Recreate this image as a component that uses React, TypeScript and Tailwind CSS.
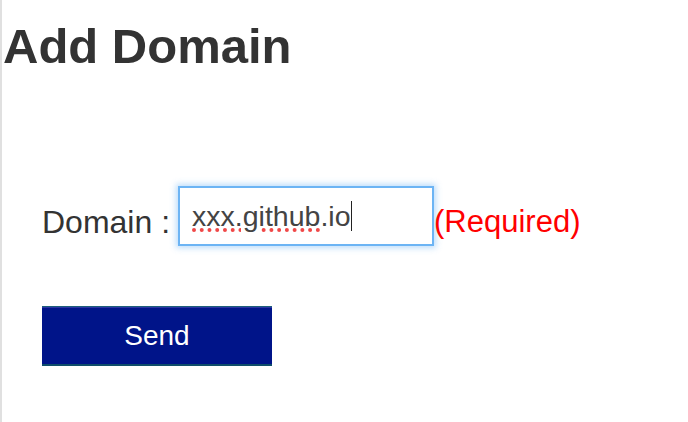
export default function App() {
  return (
    <div className="min-h-screen border-l-2 border-[#e0e0e0] bg-white font-['Liberation_Sans',Arial,sans-serif] text-[#333]">
      <h1 className="ml-px pt-[18px] text-[49px] font-bold leading-[56px]">Add Domain</h1>

      <form className="pl-10" onSubmit={(e) => e.preventDefault()}>
        <div className="mt-[112px] flex items-end">
          <label className="mb-[8px] text-[32px] leading-none">Domain :</label>
          <div
            role="textbox"
            className="ml-[8px] flex h-[60px] w-[256px] items-center border-2 border-[#6cb4f4] bg-white pl-[12px] text-[28.5px] leading-none text-[#444] shadow-[0_0_6px_2px_rgba(108,180,244,0.45)]"
          >
            <span className="underline decoration-[#f04848] decoration-dotted decoration-[4px] underline-offset-[3px]">
              xxx.github
            </span>
            <span>.io</span>
            <span className="ml-px h-[30px] w-px bg-[#222]" />
          </div>
          <span className="mb-[9px] text-[31px] leading-none text-[#ff0000]">(Required)</span>
        </div>

        <button
          type="submit"
          className="mt-[60px] h-[60px] w-[230px] border-t border-b-2 border-t-[#1d5f7a] border-b-[#0e4d6b] bg-[#001489] text-[28px] leading-none text-white shadow-[inset_0_1px_0_#2b35a3]"
        >
          Send
        </button>
      </form>
    </div>
  );
}
